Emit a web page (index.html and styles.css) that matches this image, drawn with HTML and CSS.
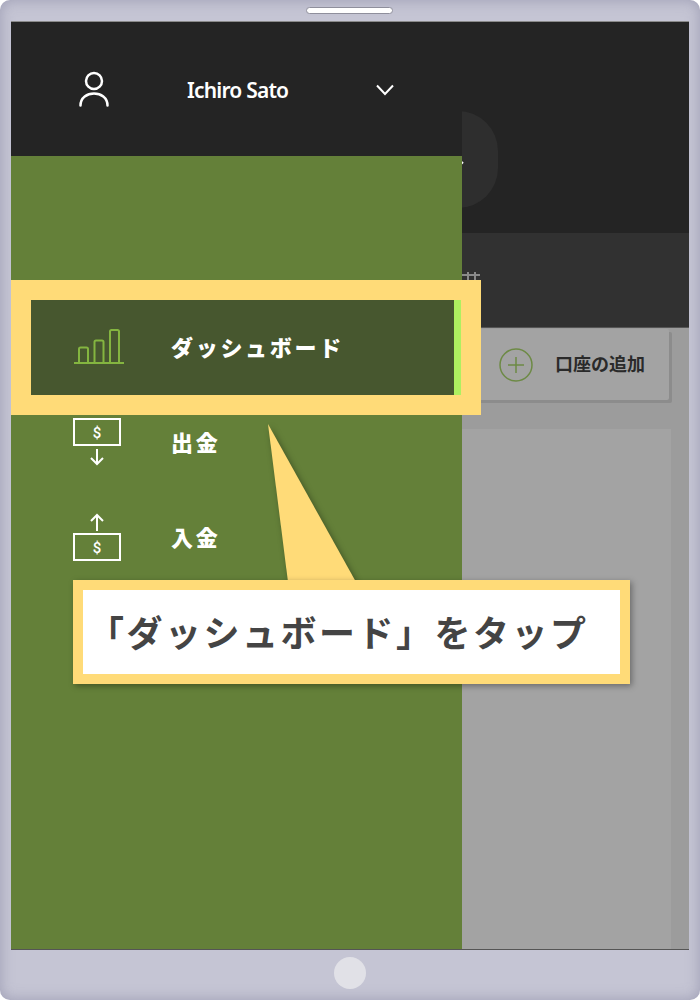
FILE: index.html
```html
<!DOCTYPE html>
<html lang="ja">
<head>
    <meta charset="UTF-8">
    <title>ダッシュボード</title>
    <link rel="stylesheet" href="styles.css">
</head>
<body>
    <div class="device">
        <div class="bezel-top"><div class="speaker"></div></div>

        <div class="screen">
            <!-- page behind the drawer -->
            <div class="page">
                <div class="page-header">
                    <div class="pill">
                        <svg class="pill-chevron" width="12" height="8" viewBox="0 0 12 8">
                            <path d="M1 1L6 6L11 1" fill="none" stroke="#fff" stroke-width="2"/>
                        </svg>
                    </div>
                </div>
                <div class="page-band">
                    <svg class="band-mark" width="18" height="8" viewBox="0 0 18 8">
                        <path d="M0 3H18M6 0V8M13 0V8" fill="none" stroke="#8a8a8a" stroke-width="2"/>
                    </svg>
                </div>
                <div class="page-body">
                    <div class="add-row">
                        <div class="add-button">
                            <svg width="34" height="34" viewBox="0 0 34 34">
                                <circle cx="17" cy="17" r="16" fill="none" stroke="#6d8a45" stroke-width="1.5"/>
                                <path d="M17 9V25M9 17H25" fill="none" stroke="#6d8a45" stroke-width="1.5"/>
                            </svg>
                            <span class="add-label">口座の追加</span>
                        </div>
                    </div>
                    <div class="page-card"></div>
                </div>
            </div>

            <!-- side drawer -->
            <div class="drawer">
                <div class="drawer-user">
                    <svg class="user-icon" width="32" height="36" viewBox="0 0 32 36">
                        <circle cx="16" cy="10" r="8" fill="none" stroke="#fff" stroke-width="2.5"/>
                        <path d="M2.500 34.500C2.500 18.500 29.500 18.500 29.500 34.500" fill="none" stroke="#fff" stroke-width="2.5" stroke-linecap="round"/>
                    </svg>
                    <span class="user-name">Ichiro Sato</span>
                    <svg class="user-chevron" width="19" height="12" viewBox="0 0 19 12">
                        <path d="M1 1.500L9 10L17 1.500" fill="none" stroke="#fff" stroke-width="2"/>
                    </svg>
                </div>
                <div class="menu">
                    <div class="menu-item active">
                        <svg class="menu-icon bars" width="52" height="36" viewBox="0 0 52 36">
                            <path d="M1 34H51" stroke="#84b540" stroke-width="2" fill="none"/>
                            <path d="M6 34V20a1.500 1.500 0 0 1 1.500-1.500H13.500a1.500 1.500 0 0 1 1.500 1.500V34M21.500 34V13a1.500 1.500 0 0 1 1.500-1.500H29a1.500 1.500 0 0 1 1.500 1.500V34M37 34V2.500a1.500 1.500 0 0 1 1.500-1.500H44.500a1.500 1.500 0 0 1 1.500 1.500V34" stroke="#84b540" stroke-width="2" fill="none"/>
                        </svg>
                        <span class="menu-label">ダッシュボード</span>
                    </div>
                    <div class="menu-item">
                        <svg class="menu-icon money" width="52" height="48" viewBox="0 0 52 48">
                            <rect x="1" y="1" width="46" height="26" fill="none" stroke="#fff" stroke-width="2"/>
                            <text x="24" y="19.500" class="dollar">$</text>
                            <path d="M24 31V46M18 40L24 46L30 40" fill="none" stroke="#fff" stroke-width="2"/>
                        </svg>
                        <span class="menu-label">出金</span>
                    </div>
                    <div class="menu-item">
                        <svg class="menu-icon money" width="52" height="48" viewBox="0 0 52 48">
                            <path d="M24 18V2M18 8L24 2L30 8" fill="none" stroke="#fff" stroke-width="2"/>
                            <rect x="1" y="21" width="46" height="26" fill="none" stroke="#fff" stroke-width="2"/>
                            <text x="24" y="39.500" class="dollar">$</text>
                        </svg>
                        <span class="menu-label">入金</span>
                    </div>
                </div>
            </div>

            <!-- tutorial overlay -->
            <div class="highlight"></div>
            <svg class="callout-tail" width="100" height="170" viewBox="0 0 100 170">
                <path d="M6 3L26 161H94Z" fill="#ffdb78"/>
            </svg>
            <div class="callout">「ダッシュボード」をタップ</div>
        </div>

        <div class="bezel-bottom"><div class="home-button"></div></div>
    </div>
</body>
</html>
```

FILE: styles.css
```css
body {
    margin: 0;
    background: white;
    font-family: "Noto Sans CJK JP", "Noto Sans", sans-serif;
}
.device {
    width: 700px;
    height: 1000px;
    display: flex;
    flex-direction: column;
    padding: 0 11px;
    box-sizing: border-box;
    border-radius: 10px;
    background: #c5c5d4;
    box-shadow: inset 0 0 14px rgba(120,120,150,0.5);
    overflow: hidden;
}
.bezel-top {
    height: 22px;
    flex: none;
    display: flex;
    justify-content: center;
    align-items: flex-start;
}
.speaker {
    width: 87px;
    height: 7px;
    margin-top: 7px;
    margin-right: 1px;
    background: white;
    border: 1px solid #8f8f9c;
    border-radius: 4px;
    box-sizing: border-box;
}
.bezel-bottom {
    height: 51px;
    flex: none;
    display: flex;
    justify-content: center;
    border-top: 1px solid #555;
    box-sizing: border-box;
    margin-top: -1px;
    position: relative;
}
.home-button {
    width: 32px;
    height: 32px;
    margin-top: 7px;
    margin-right: 1px;
    border-radius: 50%;
    background: #e1e1e7;
}
.screen {
    flex: 1;
    position: relative;
    overflow: hidden;
    box-shadow: 0 -1px 0 #8a8a8a;
}
.page {
    height: 100%;
    display: flex;
    flex-direction: column;
    background: #9c9c9c;
}
.page-header {
    height: 211px;
    flex: none;
    background: #242424;
    padding: 89px 0 0 367px;
    box-sizing: border-box;
}
.pill {
    width: 120px;
    height: 97px;
    border-radius: 40px;
    background: #2e2e2e;
    display: flex;
    align-items: center;
    padding-left: 74px;
    box-sizing: border-box;
}
.pill-chevron {
    margin-top: 11px;
}
.page-band {
    height: 95px;
    flex: none;
    background: #313131;
    padding-left: 451px;
    box-sizing: border-box;
    border-bottom: 1px solid #555;
}
.band-mark {
    display: block;
    margin-top: 39px;
}
.page-body {
    flex: 1;
    display: flex;
    flex-direction: column;
    padding: 1px 18px 0 0;
}
.add-row {
    display: flex;
    justify-content: flex-end;
    padding-right: 2px;
}
.add-button {
    width: 250px;
    height: 71px;
    display: flex;
    align-items: center;
    gap: 22px;
    padding-left: 80px;
    box-sizing: border-box;
    background: #a3a3a3;
    box-shadow: 3px 3px 0 #8c8c8c;
    border-radius: 2px;
}
.add-label {
    font-size: 18px;
    font-weight: 700;
    color: #2a2a2a;
    margin-bottom: 3px;
}
.page-card {
    flex: 1;
    margin-top: 29px;
    margin-left: 200px;
    background: #a3a3a3;
}
.drawer {
    position: absolute;
    left: 0;
    top: 0;
    bottom: 0;
    width: 451px;
    background: #648039;
}
.drawer-user {
    height: 134px;
    display: flex;
    align-items: center;
    background: #242424;
    color: white;
}
.user-icon {
    margin-left: 67px;
}
.user-name {
    margin-left: 77px;
    width: 189px;
    margin-top: 1px;
    font-family: "Noto Sans", sans-serif;
    font-size: 21px;
    font-weight: 600;
    letter-spacing: -0.8px;
}
.user-chevron {
    margin-top: 2px;
}
.menu {
    padding-top: 144px;
}
.menu-item {
    height: 95px;
    display: flex;
    align-items: center;
    padding-left: 62px;
    box-sizing: border-box;
    color: white;
}
.menu-item.active {
    background: #47572f;
    border-right: 7px solid #aef060;
    margin-right: 1px;
}
.menu-icon {
    flex: none;
    margin-right: 46px;
}
.menu-icon.bars {
    margin-bottom: 1px;
}
.menu-icon.money {
    margin-bottom: 1px;
}
.menu-label {
    font-size: 22px;
    font-weight: 900;
    letter-spacing: 2.7px;
    margin-bottom: 4px;
}
.dollar {
    font-family: Roboto, sans-serif;
    font-size: 15px;
    font-weight: 500;
    fill: white;
    text-anchor: middle;
}
.highlight {
    position: absolute;
    left: 0;
    top: 258px;
    width: 470px;
    height: 135px;
    box-sizing: border-box;
    border: 20px solid #ffdb78;
}
.callout-tail {
    position: absolute;
    left: 251px;
    top: 399px;
    filter: drop-shadow(2px 2px 3px rgba(0,0,0,0.35));
}
.callout {
    position: absolute;
    left: 62px;
    top: 558px;
    width: 557px;
    height: 104px;
    box-sizing: border-box;
    border: 10px solid #ffdb78;
    background: white;
    box-shadow: 2px 2px 6px rgba(0,0,0,0.35);
    display: flex;
    align-items: center;
    padding: 0 0 2px 5px;
    font-size: 36px;
    font-weight: 700;
    letter-spacing: 2.5px;
    color: #444;
    white-space: nowrap;
}
```
